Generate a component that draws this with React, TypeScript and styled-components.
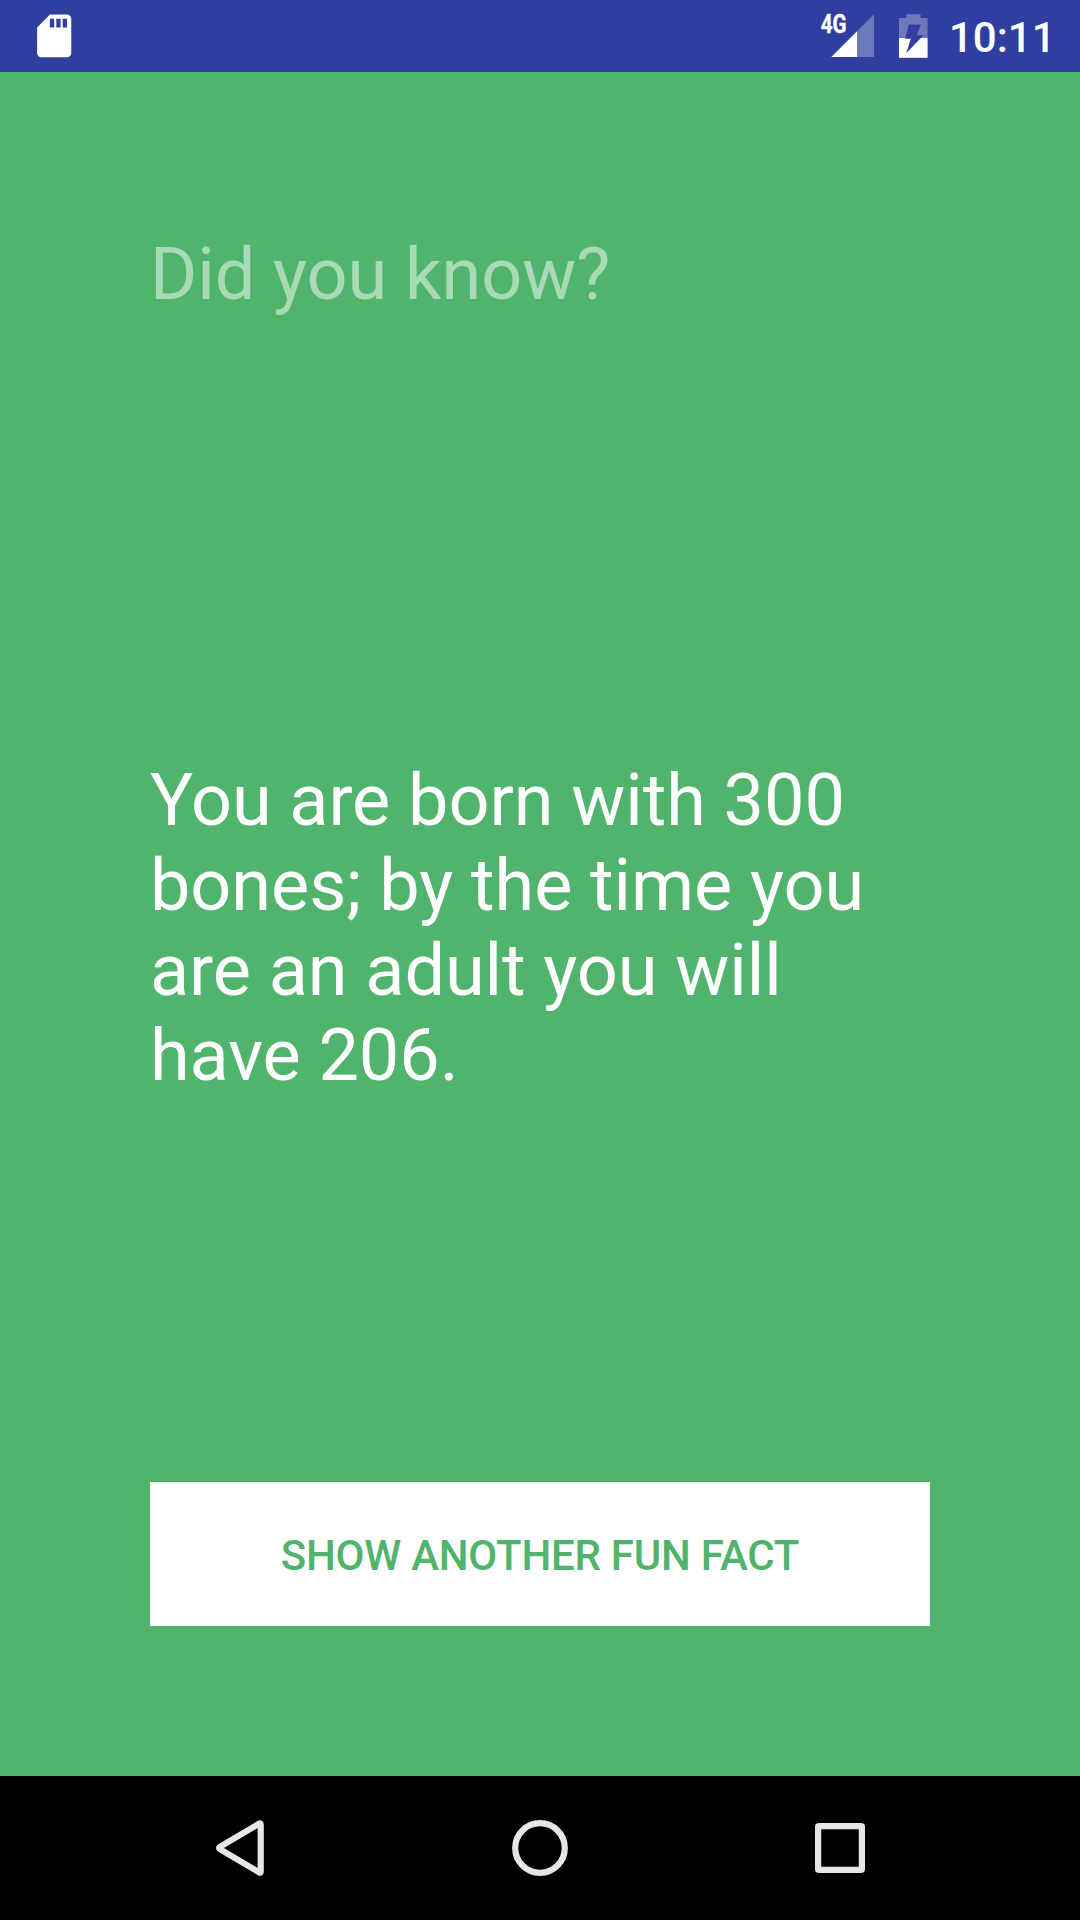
import React, { useState } from "react";
import styled, { createGlobalStyle } from "styled-components";

const GlobalStyle = createGlobalStyle`
  body {
    margin: 0;
    background: #51b46d;
    font-family: Roboto, "Noto Sans", sans-serif;
  }
`;

const Screen = styled.div`
  display: flex;
  flex-direction: column;
  width: 1080px;
  height: 1920px;
  overflow: hidden;
  background: #51b46d;
`;

const StatusBar = styled.header`
  display: flex;
  align-items: center;
  justify-content: space-between;
  flex: none;
  height: 72px;
  box-sizing: border-box;
  padding: 0 26px 0 28px;
  background: #303f9f;
`;

const StatusIcons = styled.div`
  display: flex;
  align-items: center;
  gap: 19px;
  height: 100%;
`;

const Glyph = styled.svg`
  display: block;
  flex: none;
`;

const Clock = styled.time`
  width: 105px;
  margin-left: 2px;
  padding-top: 3px;
  color: #fff;
  font-size: 42px;
  font-weight: 500;
  line-height: 49px;
  white-space: nowrap;
`;

const Content = styled.main`
  display: flex;
  flex-direction: column;
  justify-content: space-between;
  flex: 1;
  padding: 160px 150px 150px;
`;

const Title = styled.h1`
  margin: 0;
  color: rgba(255, 255, 255, 0.5);
  font-size: 72px;
  font-weight: 400;
  letter-spacing: -0.05px;
  line-height: 85px;
`;

const Fact = styled.p`
  margin: 0 0 -57px;
  color: #fff;
  font-size: 72px;
  letter-spacing: -0.06px;
  line-height: 85px;
`;

const FactButton = styled.button`
  height: 144px;
  flex: none;
  margin: 0;
  padding: 3px 0 0;
  border: 0;
  background: #fff;
  box-shadow: 0 -1px 0 rgba(0, 0, 0, 0.06);
  color: #51b46d;
  font-family: inherit;
  font-size: 42px;
  font-weight: 500;
  letter-spacing: -0.24px;
  line-height: 49px;
  text-transform: uppercase;
`;

const NavBar = styled.nav`
  display: grid;
  grid-template-columns: repeat(3, 300px);
  justify-content: center;
  flex: none;
  height: 144px;
  background: #000;
`;

const NavKey = styled.div`
  display: flex;
  align-items: center;
  justify-content: center;
`;

const NavGlyph = styled.svg`
  fill: none;
  stroke: #e6e6e6;
  stroke-width: 6.2;
  stroke-linejoin: round;
`;

const SdCard = () => (
  <Glyph width="52" height="52" viewBox="-0.26 -0.15 24.36 24.36" fill="#fff">
    <path d="M18 2h-8L4.02 8 4 20c0 1.1.9 2 2 2h12c1.1 0 2-.9 2-2V4c0-1.1-.9-2-2-2zm-6 6h-2V4h2v4zm3 0h-2V4h2v4zm3 0h-2V4h2v4z" />
  </Glyph>
);

const Signal = () => (
  <Glyph width="60" height="72" viewBox="0 0 60 72" fill="#fff">
    <path d="M54 14.3V57H37V31.3z" fillOpacity="0.3" />
    <path d="M37 31.3V57H11.3z" />
    <text
      x="0.7"
      y="33.1"
      fontSize="25"
      fontWeight="700"
      stroke="#fff"
      strokeWidth="0.4"
      textLength="25.8"
      lengthAdjust="spacingAndGlyphs"
    >
      4G
    </text>
  </Glyph>
);

const Battery = () => (
  <Glyph width="29" height="72" viewBox="0 0 29 72" fill="#fff">
    <path d="M7.2 14.3H21.5V18H28.6V38H0V18H7.2z" fillOpacity="0.3" />
    <path d="M0 38H28.6V57.8H0z" />
    <path d="M9.7 24.4H22L17.8 35.3H24.5L7.2 53.3L11.9 38.8H6.2z" fill="#303f9f" />
  </Glyph>
);

const facts = ["You are born with 300 bones; by the time you are an adult you will have 206."];

export default function App() {
  const [index, setIndex] = useState(0);
  return (
    <>
      <GlobalStyle />
      <Screen>
        <StatusBar>
          <SdCard />
          <StatusIcons>
            <Signal />
            <Battery />
            <Clock>10:11</Clock>
          </StatusIcons>
        </StatusBar>
        <Content>
          <Title>Did you know?</Title>
          <Fact>{facts[index]}</Fact>
          <FactButton onClick={() => setIndex((index + 1) % facts.length)}>
            Show another fun fact
          </FactButton>
        </Content>
        <NavBar>
          <NavKey>
            <NavGlyph width="60" height="60" viewBox="0 0 60 60">
              <path d="M50.7 6.5V53.5Q50.7 55.2 49.2 54.4L9.9 31.2Q8.2 30 9.9 28.8L49.2 5.6Q50.7 4.8 50.7 6.5z" />
            </NavGlyph>
          </NavKey>
          <NavKey>
            <NavGlyph width="60" height="60" viewBox="0 0 60 60">
              <circle cx="30" cy="30" r="24.8" />
            </NavGlyph>
          </NavKey>
          <NavKey>
            <NavGlyph width="60" height="60" viewBox="0 0 60 60">
              <rect x="8.1" y="8.1" width="43.8" height="43.8" rx="1" />
            </NavGlyph>
          </NavKey>
        </NavBar>
      </Screen>
    </>
  );
}
